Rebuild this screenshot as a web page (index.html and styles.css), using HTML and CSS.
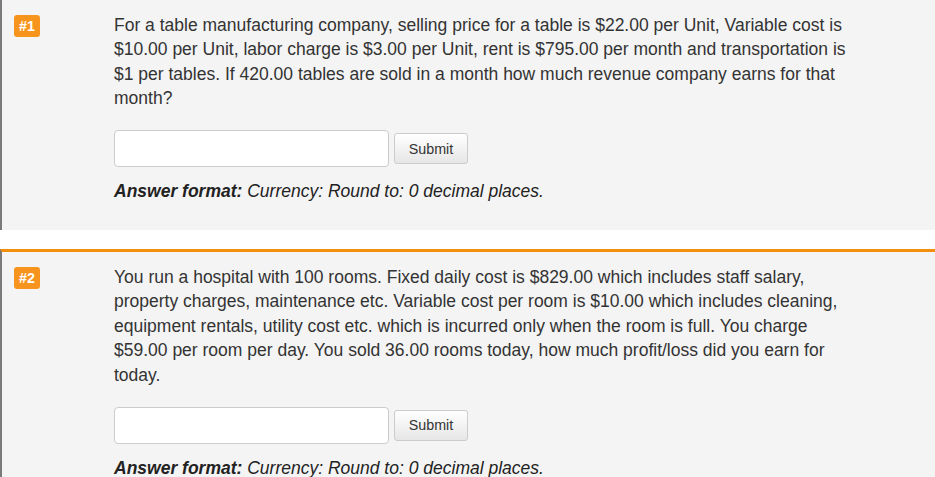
FILE: index.html
```html
<!DOCTYPE html>
<html>
<head>
<meta charset="utf-8">
<link rel="stylesheet" href="styles.css">
</head>
<body>
<div class="question first">
  <div class="badge-col"><span class="badge">#1</span></div>
  <div class="content">
    <p class="text">For a table manufacturing company, selling price for a table is $22.00 per Unit, Variable cost is $10.00 per Unit, labor charge is $3.00 per Unit, rent is $795.00 per month and transportation is $1 per tables. If 420.00 tables are sold in a month how much revenue company earns for that month?</p>
    <div class="form">
      <input class="answer" type="text">
      <button class="submit">Submit</button>
    </div>
    <p class="format"><b>Answer format:</b> Currency: Round to: 0 decimal places.</p>
  </div>
</div>
<div class="gap"></div>
<div class="question second">
  <div class="badge-col"><span class="badge">#2</span></div>
  <div class="content">
    <p class="text">You run a hospital with 100 rooms. Fixed daily cost is $829.00 which includes staff salary, property charges, maintenance etc. Variable cost per room is $10.00 which includes cleaning, equipment rentals, utility cost etc. which is incurred only when the room is full. You charge $59.00 per room per day. You sold 36.00 rooms today, how much profit/loss did you earn for today.</p>
    <div class="form">
      <input class="answer" type="text">
      <button class="submit">Submit</button>
    </div>
    <p class="format"><b>Answer format:</b> Currency: Round to: 0 decimal places.</p>
  </div>
</div>
</body>
</html>
```
FILE: styles.css
```css
html, body {
  margin: 0;
  padding: 0;
  background: #fff;
  font-family: "Liberation Sans", Arial, sans-serif;
  overflow: hidden;
}
.question {
  display: grid;
  grid-template-columns: 112px 1fr;
  background: #f4f4f4;
  border-left: 2px solid #7a7a7a;
  padding: 12.5px 0 26px 0;
}
.first {
  box-sizing: border-box;
  height: 230px;
}
.second {
  border-top: 3px solid #f28f0c;
  height: 300px;
}
.gap {
  height: 19px;
  background: #fff;
}
.badge-col {
  padding-left: 12px;
  padding-top: 2.5px;
}
.badge {
  display: inline-block;
  width: 26px;
  height: 22px;
  line-height: 22px;
  text-align: center;
  background: #f7941d;
  color: #fff;
  font-weight: bold;
  font-size: 14.3px;
  border-radius: 3px;
}
.content {
  width: 745px;
}
.text {
  margin: 0;
  font-size: 17.5px;
  line-height: 24.6px;
  color: #333;
}
.form {
  display: flex;
  align-items: center;
  gap: 5px;
  margin-top: 19.5px;
}
.answer {
  width: 275px;
  height: 37px;
  box-sizing: border-box;
  border: 1px solid #ccc;
  border-radius: 4px;
  background: #fff;
  margin: 0;
}
.submit {
  width: 74px;
  height: 31px;
  box-sizing: border-box;
  border: 1px solid #ccc;
  border-radius: 3px;
  background: linear-gradient(#fff, #e6e6e6);
  font-family: "Liberation Sans", Arial, sans-serif;
  font-size: 14.3px;
  color: #333;
  padding: 0;
}
.format {
  margin: 12px 0 0 0;
  font-size: 17.5px;
  line-height: 24.6px;
  font-style: italic;
  color: #222;
}
```
